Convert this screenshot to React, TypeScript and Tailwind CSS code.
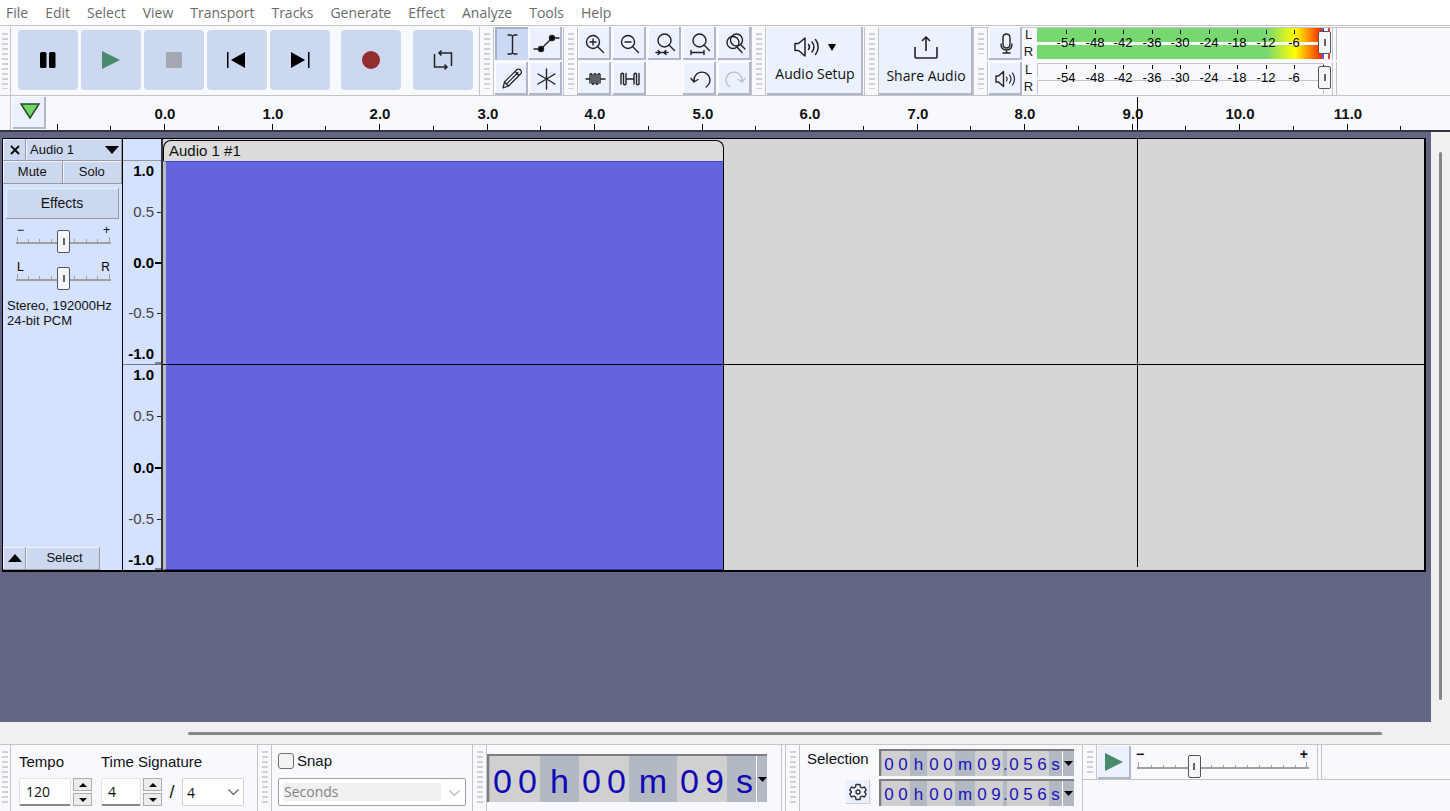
import { useState } from "react";
import type { ReactNode } from "react";
import clsx from "clsx";

const MENUS = ["File", "Edit", "Select", "View", "Transport", "Tracks", "Generate", "Effect", "Analyze", "Tools", "Help"];
const PX_PER_SECOND = 107.5;
const CURSOR_SECONDS = 9.056;
const CLIP_SECONDS = 5.22;

const METER_MARKS = [-54, -48, -42, -36, -30, -24, -18, -12, -6, 0];
const RANGE_THUMB =
  "appearance-none bg-transparent [&::-webkit-slider-thumb]:h-[23px] [&::-webkit-slider-thumb]:w-[13px] [&::-webkit-slider-thumb]:appearance-none [&::-webkit-slider-thumb]:rounded-[2px] [&::-webkit-slider-thumb]:border [&::-webkit-slider-thumb]:border-[#55565a] [&::-webkit-slider-thumb]:bg-[linear-gradient(#666,#666)] [&::-webkit-slider-thumb]:bg-[length:2px_7px] [&::-webkit-slider-thumb]:bg-center [&::-webkit-slider-thumb]:bg-no-repeat [&::-webkit-slider-thumb]:bg-[#f4f6fb]";

function Grip({ first = false }: { first?: boolean }) {
  return (
    <div className={clsx("shrink-0 border-r border-[#c4c4c4] py-[6px]", first ? "w-[11px] pl-[2px]" : "w-[14px] pl-[4px]")}>
      <div className="h-full w-[6px] bg-[repeating-linear-gradient(to_bottom,#cfd1d6_0px,#cfd1d6_2px,transparent_2px,transparent_5px)]" />
    </div>
  );
}

function Icon({ children, className }: { children: ReactNode; className?: string }) {
  return (
    <svg
      viewBox="0 0 33 33"
      className={clsx("h-[33px] w-[33px]", className)}
      fill="none"
      stroke="currentColor"
      strokeWidth="1.4"
      strokeLinecap="round"
      strokeLinejoin="round"
    >
      {children}
    </svg>
  );
}

type ToolButtonProps = { label: string; children: ReactNode; active?: boolean; disabled?: boolean };

function ToolButton({ label, children, active, disabled }: ToolButtonProps) {
  return (
    <button
      aria-label={label}
      disabled={disabled}
      className={clsx(
        "flex h-[33px] w-[33px] items-center justify-center overflow-hidden",
        active
          ? "bg-[#ccd9f2] shadow-[inset_2px_2px_0_#a6b0c9]"
          : "bg-[#ebf1ff] shadow-[inset_-2px_-2px_0_#b1b6ca,inset_1px_1px_0_#fff]",
        disabled ? "text-[#b9bdc6]" : "text-[#222]"
      )}
    >
      <Icon>{children}</Icon>
    </button>
  );
}

function TransportButton({ label, children, className }: { label: string; children: ReactNode; className?: string }) {
  return (
    <button aria-label={label} className={clsx("h-[60px] w-[60px] rounded bg-[#ccd8f0]", className)}>
      <svg viewBox="0 0 60 60" className="h-full w-full">
        {children}
      </svg>
    </button>
  );
}

function Speaker({ className }: { className: string }) {
  return (
    <svg viewBox="0 0 26 20" className={className} fill="none" stroke="#222" strokeWidth="1.5" strokeLinecap="round" strokeLinejoin="round">
      <path d="M1 6.500h3.500L11 1v18l-6.500-5.500H1z" />
      <path d="M14.500 7.500a4 4 0 0 1 0 5M18 5a7.500 7.500 0 0 1 0 10M21.500 2.500a12 12 0 0 1 0 15" />
    </svg>
  );
}

function TransportToolbar() {
  return (
    <div className="flex border-r border-[#c4c4c4] py-[3px] pr-[6px] pl-[7px]">
      <div className="flex gap-[3px]">
        <TransportButton label="Pause">
          <rect x="22" y="22" width="6.500" height="16" rx="1.500" />
          <rect x="31" y="22" width="6.500" height="16" rx="1.500" />
        </TransportButton>
        <TransportButton label="Play">
          <path d="M21 21l18 9-18 9z" fill="#478b6c" />
        </TransportButton>
        <TransportButton label="Stop">
          <rect x="22" y="22" width="16" height="16" rx="1" fill="#a4a8b2" />
        </TransportButton>
        <TransportButton label="Skip to start">
          <path d="M20 22h1.500v16H20zM38 22v16l-14-8z" />
        </TransportButton>
        <TransportButton label="Skip to end">
          <path d="M38 22h1.500v16H38zM21 22v16l14-8z" />
        </TransportButton>
      </div>
      <TransportButton label="Record" className="ml-[11px]">
        <circle cx="30" cy="30" r="9" fill="#932e2e" />
      </TransportButton>
      <TransportButton label="Loop" className="ml-[12px]">
        <path d="M21.500 24v13H34M38.500 36V23H26M28.500 20.500L26 23l2.500 2.500M31.500 34.500L34 37l-2.500 2.500" fill="none" stroke="#222" strokeWidth="1.5" />
      </TransportButton>
    </div>
  );
}

function ToolsToolbar() {
  return (
    <div className="grid grid-cols-[33px_33px] gap-x-[1px] gap-y-[2px] border-r border-[#c4c4c4] px-[1px]">
      <ToolButton label="Selection tool" active>
        <path d="M13 8h3l1.500 1L19 8h3M17.500 9v17M13 27h3l1.500-1 1.500 1h3" />
      </ToolButton>
      <ToolButton label="Envelope tool">
        <path d="M5 22h7l11-11h7" />
        <circle cx="12" cy="22" r="2.500" fill="#000" />
        <circle cx="23" cy="11" r="2.500" fill="#000" />
      </ToolButton>
      <ToolButton label="Draw tool">
        <path d="M8 26l1.500-6L22 7.500q2-1 3.500.5t.5 3.500L13.500 24zM20 9.500l4 4M9.500 20l4 4M11.500 22L23 10.500" strokeWidth="1.2" />
      </ToolButton>
      <ToolButton label="Multi-tool">
        <path d="M17.500 7v20M9 12l17 10M26 12L9 22" />
      </ToolButton>
    </div>
  );
}

function EditToolbar() {
  return (
    <div className="grid grid-cols-[33px_33px_33px_33px_33px] gap-[2px] border-r border-[#c4c4c4]">
      <ToolButton label="Zoom in">
        <circle cx="15" cy="15" r="6.500" />
        <path d="M19.500 19.500l6 6M12 15h6M15 12v6" />
      </ToolButton>
      <ToolButton label="Zoom out">
        <circle cx="15" cy="15" r="6.500" />
        <path d="M19.500 19.500l6 6M12 15h6" />
      </ToolButton>
      <ToolButton label="Fit selection to width">
        <circle cx="16.500" cy="13.500" r="6.500" />
        <path d="M21 18l5.500 5.500M8 25.500h12M10 23.500l2.500 2-2.500 2M18 23.500l-2.500 2 2.500 2" />
      </ToolButton>
      <ToolButton label="Fit project to width">
        <circle cx="16.500" cy="13.500" r="6.500" />
        <path d="M21 18l5.500 5.500M8 25.500h13M8 23.500v4M21 23.500v4" />
      </ToolButton>
      <ToolButton label="Zoom toggle">
        <circle cx="18.500" cy="13" r="6" />
        <circle cx="15" cy="15.500" r="6" />
        <path d="M22.500 17.500l4.500 4.500M19 20l5 5.500" />
      </ToolButton>
      <ToolButton label="Trim audio outside selection">
        <path d="M8 17h4M12 21v-8.500q1-1.500 2 0v9q1 1.500 2 0v-9q1-1.500 2 0v9q1 1.500 2 0v-9q1-1.500 2 0V21M23 17h4" />
      </ToolButton>
      <ToolButton label="Silence audio selection">
        <path d="M8 22V12q1.500-1.500 2.500 0v10q1.500 1.500 2.500 0V11.500M13 17h8M21 22V12q1.500-1.500 2.500 0v10q1.500 1.500 2.500 0V11.500" />
      </ToolButton>
      <span />
      <ToolButton label="Undo">
        <path d="M11 19a8 8 0 1 1 12 6M8 16.500l3 3.500 4-2.500" />
      </ToolButton>
      <ToolButton label="Redo" disabled>
        <path d="M24 19a8 8 0 1 0-12 6M27 16.500L24 20l-4-2.500" />
      </ToolButton>
    </div>
  );
}

function Meter({ live = false, label }: { live?: boolean; label: string }) {
  const bar = live
    ? "bg-[linear-gradient(to_right,#78d870_0px,#78d870_230px,#ffff00_258px,#ff2a00_284px)] border-r-2 border-[#5b5bff]"
    : "border border-b-0 border-[#c4c4c4]";
  return (
    <div className="flex h-[33px]">
      <div className="flex w-[13px] flex-col text-center text-[13px] leading-[17px] text-[#222]">
        <span className="h-[16px] leading-[15px]">L</span>
        <span>R</span>
      </div>
      <div className="relative ml-[2px] flex w-[294px] flex-col gap-[3px] pt-[1px] pb-[1px]">
        <div className="flex h-[14px] gap-[4px]">
          <div className={clsx("w-[287px]", bar)} />
          {live && <div className="w-[2px] shrink-0 bg-[#ff3b3b]" />}
        </div>
        <div className="flex h-[14px] gap-[4px]">
          <div className={clsx("w-[287px]", bar)} />
          {live && <div className="w-[2px] shrink-0 bg-[#ff3b3b]" />}
        </div>
        {METER_MARKS.map((mark, i) => (
          <div
            key={mark}
            className="absolute top-[3px] flex w-8 -translate-x-1/2 flex-col items-center text-[13px] leading-[14px] text-black"
            style={{ left: Math.round(29 + i * 28.5) }}
          >
            <span className="h-[4px] w-px bg-black" />
            <span className="mt-[2px]">{mark}</span>
          </div>
        ))}
        <input
          type="range"
          aria-label={label}
          defaultValue={100}
          className={clsx("absolute inset-x-0 top-[4px] h-[23px] w-full", RANGE_THUMB)}
        />
      </div>
    </div>
  );
}

function MeterToolbar() {
  return (
    <div className="flex flex-1 flex-col gap-[2px] bg-[linear-gradient(#c4c4c4,#c4c4c4)] bg-[length:100%_1px] bg-[0_33px] bg-no-repeat">
      {[true, false].map((live) => (
        <div key={String(live)} className="flex h-[33px]">
          <Grip />
          <div className="flex border-r border-[#c4c4c4] pr-px pl-[1px]">
            <ToolButton label={live ? "Record meter" : "Playback meter"}>
              {live ? (
                <path d="M17.500 7q3.500 0 3.500 4v6q0 4-3.500 4T14 17v-6q0-4 3.500-4M12 17q0 6 5.500 6t5.500-6M17.500 23v3M14 26h7" />
              ) : (
                <g>
                  <path d="M7 14h2.500l5-4.500v15l-5-4.500H7z" />
                  <path d="M17.500 15q1.500 2 0 4M20.500 13q3 4 0 8M23.500 11q4 6 0 12" strokeWidth="1.200" />
                </g>
              )}
            </ToolButton>
            <Meter live={live} label={live ? "Recording level" : "Playback level"} />
          </div>
          <div className="w-[4px] border-r border-[#c4c4c4]" />
        </div>
      ))}
    </div>
  );
}

function Timeline() {
  const halves = Array.from({ length: 26 }, (_, i) => i / 2 - 1);
  return (
    <div className="flex h-[36px] border-b-2 border-[#33353b]">
      <div className="w-[11px] shrink-0 border-r border-[#c4c4c4]" />
      <button aria-label="Pin play head" className="mt-[1px] ml-[2px] h-[32px] w-[33px] shrink-0 bg-[#ebf1ff] shadow-[inset_-2px_-2px_0_#b1b6ca]">
        <svg viewBox="0 0 33 32" className="h-full w-full">
          <path d="M8 7h18l-9 14z" fill="#70d868" stroke="#2c4a2a" strokeWidth="1.500" />
        </svg>
      </button>
      <div className="relative ml-[118px] flex-1">
        {halves.map((t) => (
          <div key={t} className="absolute bottom-0 flex w-10 -translate-x-1/2 flex-col items-center" style={{ left: Math.round(t * PX_PER_SECOND) }}>
            {t >= 0 && Number.isInteger(t) && <span className="mb-[2px] pl-[2px] text-[15px] leading-[17px] font-bold">{t.toFixed(1)}</span>}
            <span className={clsx("w-px bg-black", Number.isInteger(t) ? "h-[6px]" : "h-[4px]")} />
          </div>
        ))}
        <div className="absolute top-[1px] bottom-0 w-px bg-black" style={{ left: Math.round(CURSOR_SECONDS * PX_PER_SECOND) - 1 }} />
      </div>
    </div>
  );
}

function Slider({ label, left, right, value }: { label: string; left: string; right: string; value: number }) {
  return (
    <div className="mx-auto mt-[3px] flex h-[34px] w-[97px] flex-col text-[12px] text-black">
      <div className="flex h-[6px] justify-between px-[2px] leading-[12px]">
        <span>{left}</span>
        <span>{right}</span>
      </div>
      <div className="relative h-[23px]">
        <svg viewBox="0 0 97 23" className="h-full w-full" stroke="#a0a09c">
          <path d="M1 13h95" strokeWidth="2" />
          <path d="M2.500 7v6M13.500 9v3M24.500 9v3M36.500 9v3M59.500 9v3M71.500 9v3M82.500 9v3M94.500 7v6" />
        </svg>
        <input type="range" aria-label={label} defaultValue={value} className={clsx("absolute inset-0 h-full w-full", RANGE_THUMB)} />
      </div>
    </div>
  );
}

const RAISED = "border-r border-b border-[#9a9a9a] bg-[#ccd8f0] shadow-[inset_1px_1px_0_#eef3ff]";

function TrackPanel() {
  return (
    <div className="flex w-[120px] shrink-0 flex-col border-r border-black bg-[#d4e1ff] text-[13px] text-[#111]">
      <div className="flex h-[22px]">
        <button aria-label="Close track" className={clsx("flex w-[23px] items-center justify-center pl-[2px]", RAISED)}>
          <svg viewBox="0 0 10 10" className="h-[10px] w-[10px]" stroke="#000" strokeWidth="1.800">
            <path d="M1 1l8 8M9 1L1 9" />
          </svg>
        </button>
        <button className={clsx("flex flex-1 items-center justify-between pr-[2px] pl-[4px]", RAISED)}>
          Audio 1
          <svg viewBox="0 0 14 8" className="h-[8px] w-[14px]">
            <path d="M0 0h14L7 8z" />
          </svg>
        </button>
      </div>
      <div className="grid h-[23px] grid-cols-2">
        <button className={RAISED}>Mute</button>
        <button className={RAISED}>Solo</button>
      </div>
      <button className={clsx("mx-[3px] mt-[4px] h-[31px] text-[14px]", RAISED)}>Effects</button>
      <div className="mt-[2px] pl-[2px]">
        <Slider label="Gain" left="−" right="+" value={50} />
        <Slider label="Pan" left="L" right="R" value={50} />
      </div>
      <p className="mt-[3px] pl-[4px] leading-[15px] whitespace-nowrap">
        Stereo, 192000Hz
        <br />
        24-bit PCM
      </p>
      <div className="mt-auto flex h-[23px]">
        <button aria-label="Collapse" className={clsx("flex w-[23px] items-center justify-center pl-[2px]", RAISED)}>
          <svg viewBox="0 0 14 8" className="h-[8px] w-[14px]">
            <path d="M0 8h14L7 0z" />
          </svg>
        </button>
        <button className={clsx("w-[74px] pl-[4px]", RAISED)}>Select</button>
      </div>
    </div>
  );
}

function AmplitudeRuler({ height }: { height: number }) {
  const mid = height / 2;
  const rows = [
    { label: "1.0", y: 10, major: true },
    { label: "0.5", y: mid / 2, major: false },
    { label: "0.0", y: mid, major: true },
    { label: "-0.5", y: mid + mid / 2, major: false },
    { label: "-1.0", y: height - 10, major: true },
  ];
  return (
    <svg width="39" height={height} fontSize="15" fontFamily="Liberation Sans, sans-serif">
      {rows.map((r) => (
        <text key={r.label} x="31" y={r.y + 5} textAnchor="end" fontWeight={r.major ? 700 : 400} fill={r.major ? "#000" : "#444"}>
          {r.label}
        </text>
      ))}
      <path d={`M34 ${Math.round(mid / 2)}.5h4M34 ${Math.round(mid * 1.5)}.5h4M32 ${height - 1}h7`} stroke="#222" />
      <path d={`M32 ${Math.round(mid)}h7`} stroke="#000" strokeWidth="2" />
    </svg>
  );
}

function Track() {
  return (
    <div className="relative flex h-[434px] border-t border-r-2 border-b-2 border-l border-black bg-[#d6d6d6]">
      <TrackPanel />
      <div className="flex w-[40px] shrink-0 flex-col border-r-2 border-[#33353b] bg-[#d4e1ff]">
        <div className="h-[22px] border-b border-[#9a9a9a]" />
        <div className="h-[204px] border-b border-[#777]">
          <AmplitudeRuler height={203} />
        </div>
        <AmplitudeRuler height={205} />
      </div>
      <div className="relative flex min-w-0 flex-1">
        <div className="flex flex-col" style={{ width: Math.round(CLIP_SECONDS * PX_PER_SECOND) }}>
          <div className="mt-[1px] h-[21px] rounded-t-lg border-t border-r border-l border-black bg-[#dcdcdc] pl-[5px] text-[15px] leading-[20px] text-[#111]">
            Audio 1 #1
          </div>
          <div className="h-[203px] border-t border-r border-l-[3px] border-t-[#4444cc] border-r-black border-l-[#bdbdbd] bg-[#6464dc]" />
          <div className="flex-1 border-t border-r border-b border-l-[3px] border-t-[#2222aa] border-r-black border-b-[#3333aa] border-l-[#bdbdbd] bg-[#6464dc]" />
        </div>
        <div className="absolute inset-x-0 top-[225px] h-px bg-black" />
        <div className="absolute top-0 bottom-[3px] w-px bg-black" style={{ left: Math.round(CURSOR_SECONDS * PX_PER_SECOND) }} />
      </div>
    </div>
  );
}

function SpinBox({ label, value, width }: { label: string; value: string; width: string }) {
  const [text, setText] = useState(value);
  const step = (by: number) => setText(String(Number(text) + by));
  return (
    <div className="flex items-center gap-[2px]">
      <input
        aria-label={label}
        value={text}
        onChange={(e) => setText(e.target.value)}
        className={clsx("h-[28px] rounded-[2px] border border-b-2 border-[#e4e4e4] border-b-[#868686] bg-white pl-[6px] font-['Open_Sans'] text-[14px]", width)}
      />
      <div className="flex h-[28px] flex-col gap-[2px]">
        {[1, -1].map((by) => (
          <button
            key={by}
            aria-label={by > 0 ? `Increase ${label}` : `Decrease ${label}`}
            onClick={() => step(by)}
            className="flex h-[13px] w-[19px] items-center justify-center border border-[#adadad] bg-[#ececec]"
          >
            <svg viewBox="0 0 8 4" className="h-[4px] w-[8px]">
              <path d={by > 0 ? "M0 4h8L4 0z" : "M0 0h8L4 4z"} />
            </svg>
          </button>
        ))}
      </div>
    </div>
  );
}

function Chevron({ className }: { className?: string }) {
  return (
    <svg viewBox="0 0 11 6" className={clsx("pointer-events-none h-[6px] w-[11px]", className)} fill="none" stroke="currentColor" strokeWidth="1.200">
      <path d="M.5.5l5 5 5-5" />
    </svg>
  );
}

function TimeSignature() {
  return (
    <div className="flex w-[247px] gap-[9px] border-r border-[#c4c4c4] pt-[8px] pl-[8px]">
      <div>
        <p className="mb-[7px] text-[15px] leading-[18px]">Tempo</p>
        <SpinBox label="Tempo" value="120" width="w-[52px]" />
      </div>
      <div>
        <p className="mb-[7px] text-[15px] leading-[18px]">Time Signature</p>
        <div className="flex items-center">
          <SpinBox label="Beats" value="4" width="w-[40px]" />
          <span className="w-[20px] text-center text-[18px]">/</span>
          <div className="relative">
            <select aria-label="Beat unit" className="block h-[28px] w-[62px] appearance-none rounded-[2px] border border-[#d0d0d0] bg-white pl-[4px] font-['Open_Sans'] text-[14px]">
              <option>4</option>
            </select>
            <Chevron className="absolute top-[11px] right-[5px] text-[#666]" />
          </div>
        </div>
      </div>
    </div>
  );
}

function Snapping() {
  return (
    <div className="w-[201px] border-r border-[#c4c4c4] pt-[7px] pl-[6px]">
      <label className="mb-[8px] flex h-[18px] items-center gap-[3px] text-[15px]">
        <input type="checkbox" className="h-[16px] w-[16px] appearance-none rounded-[3px] border border-[#6e6e6e] bg-[#f3f3f3]" />
        Snap
      </label>
      <div className="relative h-[28px] w-[188px] rounded-[2px] border border-[#a0a0a0] bg-white p-[4px]">
        <select
          aria-label="Snap to"
          disabled
          className="block h-[18px] w-[158px] appearance-none bg-[#f0f0f0] pl-[1px] font-['Open_Sans'] text-[14px] leading-[18px] text-[#838383] opacity-100"
        >
          <option>Seconds</option>
        </select>
        <Chevron className="absolute top-[11px] right-[5px] text-[#bbb]" />
      </div>
    </div>
  );
}

function BigTime() {
  const digits = (d: string) => (
    <span className="flex w-[50px] bg-[#d0d0d0]">
      {[...d].map((c, i) => (
        <span key={i} className="w-[25px] text-center">
          {c}
        </span>
      ))}
    </span>
  );
  return (
    <div className="border-r border-[#c4c4c4] pt-[9px] pr-[14px]">
      <div className="flex h-[48px] border-t-2 border-l-2 border-[#7c7c7c] bg-[#b3b9c3] pl-[1px] text-[34px] leading-[50px] text-[#0f08b4]">
        {digits("00")}
        <span className="w-[39px] text-center">h</span>
        {digits("00")}
        <span className="w-[48px] text-center">m</span>
        {digits("09")}
        <span className="w-[29px] pl-[9px]">s</span>
        <button aria-label="Time format" className="flex w-[11px] items-center justify-center border-l border-white">
          <svg viewBox="0 0 9 5" className="h-[5px] w-[9px]">
            <path d="M0 0h9L4.500 5z" />
          </svg>
        </button>
      </div>
    </div>
  );
}

function SmallTime({ label }: { label: string }) {
  const digits = (d: string) => (
    <span className="flex bg-[#d0d0d0]">
      {[...d].map((c, i) => (
        <span key={i} className="w-[14px] text-center">
          {c}
        </span>
      ))}
    </span>
  );
  return (
    <div role="group" aria-label={label} className="flex h-[27px] border-t-2 border-l-2 border-[#7c7c7c] bg-[#b3b9c3] pl-[1px] text-[17px] leading-[27px] text-[#1a12bc]">
      {digits("00")}
      <span className="w-[17px] text-center">h</span>
      {digits("00")}
      <span className="w-[20px] text-center">m</span>
      {digits("09")}
      <span className="w-[4px]">.</span>
      {digits("056")}
      <span className="w-[13px] text-center">s</span>
      <button aria-label={`${label} format`} className="flex w-[12px] items-center justify-center border-l border-white">
        <svg viewBox="0 0 9 5" className="h-[5px] w-[9px]">
          <path d="M0 0h9L4.500 5z" />
        </svg>
      </button>
    </div>
  );
}

function SelectionToolbar() {
  return (
    <div className="flex border-r border-[#c4c4c4] pt-[4px] pr-[8px] pl-[7px]">
      <div className="flex w-[72px] flex-col">
        <span className="mt-[1px] text-[15px] leading-[18px]">Selection</span>
        <button aria-label="Selection options" className="mt-[12px] ml-[39px] flex h-[24px] w-[24px] items-center justify-center bg-[#ebf1ff] shadow-[inset_-1px_-1px_0_#c6cbdd]">
          <svg viewBox="0 0 18 18" className="h-[18px] w-[18px]" fill="none" stroke="#333" strokeWidth="1.400" strokeLinejoin="round">
            <path d="M6.500 4L7 1.500h4l.5 2.500 1.500.8 2.500-.8 1.700 3L15.500 9l1.700 2-1.700 3-2.500-.8-1.500.8-.5 2.500H7L6.500 14 5 13.200 2.500 14 .8 11l1.700-2L.8 7l1.700-3 2.500.8z" />
            <circle cx="9" cy="9" r="2" />
          </svg>
        </button>
      </div>
      <div className="flex flex-col gap-[3px]">
        <SmallTime label="Selection start" />
        <SmallTime label="Selection end" />
      </div>
    </div>
  );
}

function PlaySpeed() {
  return (
    <div className="flex-1">
      <div className="flex h-[35px] border-b border-[#c4c4c4]">
        <Grip />
        <button aria-label="Play at speed" className="mt-[1px] ml-px h-[33px] w-[33px] bg-[#ebf1ff] shadow-[inset_-2px_-2px_0_#b1b6ca]">
          <svg viewBox="0 0 33 33" className="h-full w-full">
            <path d="M7 7l18 9-18 9z" fill="#478b6c" />
          </svg>
        </button>
        <div className="ml-[5px] flex w-[175px] flex-col pt-[4px]">
          <div className="flex h-[6px] justify-between text-[14px] leading-[11px] font-bold">
            <span>−</span>
            <span className="pr-[3px]">+</span>
          </div>
          <div className="relative h-[23px]">
            <svg viewBox="0 0 175 23" className="h-full w-full" stroke="#a0a09c">
              <path d="M1 13h172" strokeWidth="2" />
              <path d="M2.500 7v6M15.500 10v3M27.500 10v3M39.500 10v3M75.500 10v3M87.500 10v3M99.500 10v3M111.500 10v3M123.500 10v3M135.500 10v3M147.500 10v3M159.500 10v3M170.500 7v6" />
            </svg>
            <input type="range" aria-label="Playback speed" defaultValue={32} className={clsx("absolute inset-0 h-full w-full", RANGE_THUMB)} />
          </div>
        </div>
        <div className="ml-[6px] w-[5px] border-x border-[#c4c4c4]" />
      </div>
    </div>
  );
}

export default function App() {
  return (
    <div className="flex min-h-screen flex-col bg-[#f8f9ff] font-['Liberation_Sans',sans-serif] text-[#111]">
      <nav className="flex h-[25px] items-center gap-[17px] bg-white pl-[6px] font-['Open_Sans',sans-serif] text-[14px] text-[#6b6b6b]">
        {MENUS.map((m) => (
          <button key={m}>{m}</button>
        ))}
      </nav>

      <header className="flex h-[71px] border-y border-[#c4c4c4] pt-[1px]">
        <Grip first />
        <TransportToolbar />
        <Grip />
        <ToolsToolbar />
        <Grip />
        <EditToolbar />
        <Grip />
        <div className="border-r border-[#c4c4c4] px-[1px]">
          <button className="flex h-full w-[96px] flex-col items-center bg-[#ebf1ff] pt-[10px] font-['Open_Sans'] text-[14px] shadow-[inset_-2px_-2px_0_#b1b6ca]">
            <span className="flex items-center gap-[8px]">
              <Speaker className="h-[20px] w-[26px]" />
              <svg viewBox="0 0 8 8" className="h-[8px] w-[8px]">
                <path d="M0 1h8L4 8z" />
              </svg>
            </span>
            <span className="mt-[7px] leading-[20px]">Audio Setup</span>
          </button>
        </div>
        <Grip />
        <div className="border-r border-[#c4c4c4]">
          <button className="flex h-full w-[94px] flex-col items-center bg-[#ebf1ff] pt-[9px] font-['Open_Sans'] text-[14px] shadow-[inset_-2px_-2px_0_#b1b6ca]">
            <svg viewBox="0 0 24 23" className="h-[23px] w-[24px]" fill="none" stroke="#222" strokeWidth="1.600">
              <path d="M1 11v10q0 1 1 1h20q1 0 1-1V11M12 15V1M8 5l4-4 4 4" />
            </svg>
            <span className="mt-[7px] leading-[20px]">Share Audio</span>
          </button>
        </div>
        <MeterToolbar />
      </header>

      <Timeline />

      <main className="flex flex-1">
        <div className="min-w-0 flex-1 bg-[#636585] pt-[6px] pr-[5px] pl-[2px]">
          <Track />
        </div>
        <div className="flex w-[19px] justify-center bg-[#f0f0f0] pt-[20px] pb-[22px]">
          <div className="w-[3px] rounded bg-[#868686]" />
        </div>
      </main>
      <div className="flex h-[22px] items-center bg-[#f0f0f0] pr-[68px] pl-[188px]">
        <div className="h-[3px] w-full rounded bg-[#868686]" />
      </div>

      <footer className="flex h-[67px] border-t border-[#c4c4c4]">
        <Grip first />
        <TimeSignature />
        <Grip />
        <Snapping />
        <Grip />
        <BigTime />
        <div className="w-[4px] border-r border-[#c4c4c4]" />
        <Grip />
        <SelectionToolbar />
        <PlaySpeed />
      </footer>
    </div>
  );
}
